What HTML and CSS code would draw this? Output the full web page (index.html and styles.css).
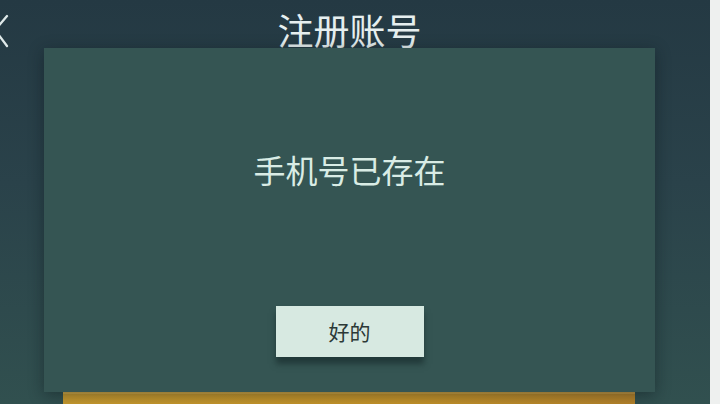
FILE: index.html
```html
<!DOCTYPE html>
<html lang="zh">
<head>
<meta charset="utf-8">
<title>注册账号</title>
<link rel="stylesheet" href="styles.css">
</head>
<body>
<div class="screen">
  <div class="app">
    <header class="topbar">
      <svg class="back" viewBox="0 0 10 40" width="10" height="40" aria-hidden="true">
        <path d="M7 6 L-5 20 L7 36" fill="none" stroke="#dfe9e9" stroke-width="2.3" stroke-linecap="round" stroke-linejoin="round"/>
      </svg>
      <h1 class="title">注册账号</h1>
      <span class="spacer"></span>
    </header>
    <main class="form">
      <div class="form-fields"></div>
      <button class="submit">注册</button>
    </main>
    <div class="dialog" role="dialog">
      <p class="message">手机号已存在</p>
      <button class="ok">好的</button>
    </div>
  </div>
  <div class="edge"></div>
</div>
</body>
</html>
```
FILE: styles.css
```css
html, body {
  margin: 0;
  padding: 0;
}
body {
  width: 720px;
  height: 404px;
  overflow: hidden;
  font-family: "Noto Sans CJK SC", "Noto Sans", sans-serif;
}
.screen {
  display: flex;
  width: 720px;
  height: 404px;
}
.app {
  position: relative;
  flex: none;
  width: 710px;
  height: 404px;
  box-sizing: border-box;
  padding-right: 11px;
  overflow: hidden;
  background: linear-gradient(180deg, #243943 0%, #2a424a 45%, #31504f 100%);
}
.edge {
  flex: none;
  width: 10px;
  height: 404px;
  background: #eef0ef;
}
.topbar {
  display: flex;
  align-items: flex-start;
  height: 48px;
}
.back {
  display: block;
  width: 10px;
  height: 40px;
  margin-top: 10px;
  flex: none;
}
.spacer {
  width: 10px;
  flex: none;
}
.title {
  flex: 1;
  margin: 11px 0 0;
  text-align: center;
  font-size: 36px;
  line-height: 36px;
  font-weight: 400;
  color: #e6efef;
  white-space: nowrap;
}
.form {
  display: flex;
  flex-direction: column;
}
.form-fields {
  height: 344px;
}
.submit {
  margin-left: 63px;
  width: 572px;
  height: 44px;
  border: 0;
  padding: 6px 0 0;
  font-family: inherit;
  font-size: 26px;
  line-height: 30px;
  letter-spacing: 8px;
  color: #3b2b0c;
  text-align: center;
  background: linear-gradient(90deg, #c89a2e 0%, #c59329 60%, #b6832a 100%);
  box-shadow: 0 2px 0 rgba(255, 220, 140, 0.25) inset;
}
.dialog {
  position: absolute;
  left: 44px;
  top: 48px;
  width: 611px;
  height: 344px;
  box-sizing: border-box;
  display: flex;
  flex-direction: column;
  align-items: center;
  background: #355553;
  box-shadow: 0 3px 14px rgba(10, 22, 26, 0.45);
}
.message {
  margin: 105px 0 0;
  font-size: 32px;
  line-height: 32px;
  color: #d9ece5;
  white-space: nowrap;
}
.ok {
  margin-top: 121px;
  width: 148px;
  height: 51px;
  border: 0;
  padding: 0;
  font-family: inherit;
  font-size: 21px;
  line-height: 51px;
  color: #2c3937;
  background: #d7e9e1;
  box-shadow: 0 7px 6px rgba(18, 34, 36, 0.55);
}
```
